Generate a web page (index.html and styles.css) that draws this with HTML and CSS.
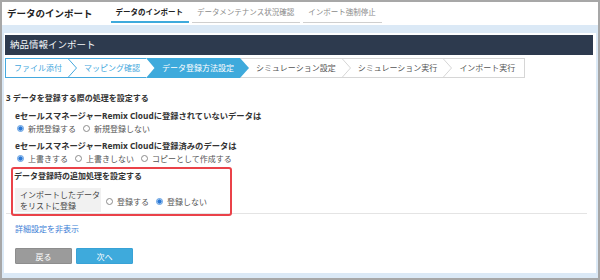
FILE: index.html
```html
<!DOCTYPE html>
<html lang="ja">
<head>
  <meta charset="UTF-8">
  <meta name="viewport" content="width=device-width, initial-scale=1.0">
  <title>データのインポート</title>
  <link rel="stylesheet" href="styles.css">
</head>
<body>
  <div class="header">
    <h1 class="page-title">データのインポート</h1>
    <nav class="tabs">
      <a class="tab active" href="#">データのインポート</a>
      <a class="tab" href="#">データメンテナンス状況確認</a>
      <a class="tab" href="#">インポート強制停止</a>
    </nav>
  </div>

  <div class="main">
    <div class="panel">
      <div class="panel-title">納品情報インポート</div>

      <div class="steps">
        <span class="step done first">ファイル添付</span>
        <span class="sep"><svg width="9" height="20" viewBox="0 0 9 20"><path d="M0 0.5H9M0 19.5H9" stroke="#45a8dd"/><polyline points="0,0.5 8.5,10 0,19.5" fill="none" stroke="#45a8dd"/></svg></span>
        <span class="step done">マッピング確認</span>
        <span class="sep"><svg width="9" height="20" viewBox="0 0 9 20"><polygon points="0,0 9,0 9,20 0,20 8.5,10" fill="#3eaadc"/></svg></span>
        <span class="step active">データ登録方法設定</span>
        <span class="sep"><svg width="9" height="20" viewBox="0 0 9 20"><path d="M0 0.5H9M0 19.5H9" stroke="#d6d6d6"/><polygon points="0,0 9,10 0,20" fill="#3eaadc"/></svg></span>
        <span class="step">シミュレーション設定</span>
        <span class="sep"><svg width="9" height="20" viewBox="0 0 9 20"><path d="M0 0.5H9M0 19.5H9" stroke="#d6d6d6"/><polyline points="0,0.5 8.5,10 0,19.5" fill="none" stroke="#d6d6d6"/></svg></span>
        <span class="step">シミュレーション実行</span>
        <span class="sep"><svg width="9" height="20" viewBox="0 0 9 20"><path d="M0 0.5H9M0 19.5H9" stroke="#d6d6d6"/><polyline points="0,0.5 8.5,10 0,19.5" fill="none" stroke="#d6d6d6"/></svg></span>
        <span class="step last">インポート実行</span>
      </div>

      <div class="content">
        <h3 class="section-title">3 データを登録する際の処理を設定する</h3>

        <p class="q">eセールスマネージャーRemix Cloudに登録されていないデータは</p>
        <div class="radios">
          <label><input type="radio" name="new" checked>新規登録する</label>
          <label><input type="radio" name="new">新規登録しない</label>
        </div>

        <p class="q">eセールスマネージャーRemix Cloudに登録済みのデータは</p>
        <div class="radios">
          <label><input type="radio" name="exist" checked>上書きする</label>
          <label><input type="radio" name="exist">上書きしない</label>
          <label><input type="radio" name="exist">コピーとして作成する</label>
        </div>

        <div class="extra">
          <h3 class="extra-title">データ登録時の追加処理を設定する</h3>
          <div class="extra-row">
            <div class="extra-label">インポートしたデータ<br>をリストに登録</div>
            <div class="radios inline">
              <label><input type="radio" name="list">登録する</label>
              <label><input type="radio" name="list" checked>登録しない</label>
            </div>
          </div>
        </div>

        <a class="toggle-link" href="#">詳細設定を非表示</a>

        <div class="buttons">
          <button class="btn btn-back">戻る</button>
          <button class="btn btn-next">次へ</button>
        </div>
      </div>
    </div>
  </div>
</body>
</html>
```

FILE: styles.css
```css
html, body {
  margin: 0;
  padding: 0;
}

body {
  width: 600px;
  height: 280px;
  box-sizing: border-box;
  border: 2px solid #a7a7a7;
  display: flex;
  flex-direction: column;
  font-family: "Noto Sans", "Noto Sans CJK JP", sans-serif;
  color: #333;
  background-color: #fff;
}

/* header */
.header {
  height: 23px;
  display: flex;
  align-items: stretch;
  flex-shrink: 0;
}

.page-title {
  margin: 0;
  padding-left: 5px;
  font-size: 9.5px;
  font-weight: bold;
  line-height: 23px;
  color: #222;
}

.tabs {
  display: flex;
  align-items: flex-end;
  gap: 3px;
  margin-left: 18px;
  margin-bottom: 2px;
}

.tab {
  font-size: 7.5px;
  line-height: 10px;
  padding: 0 6px 5px 5px;
  color: #8a8a8a;
  text-decoration: none;
  border-bottom: 1px solid #cfcfcf;
}

.tab.active {
  color: #222;
  font-weight: bold;
  padding-bottom: 4px;
  border-bottom: 2px solid #3eaadc;
}

/* main area */
.main {
  flex: 1;
  display: flex;
  flex-direction: column;
  background-color: #dbe9f6;
  padding: 8px 2px 5px 2px;
}

.panel {
  flex: 1;
  background-color: #fff;
  padding: 2px 3px 0 1px;
}

.panel-title {
  height: 20px;
  line-height: 20px;
  background-color: #2d3a4e;
  color: #f4f6f8;
  font-size: 9.5px;
  padding-left: 5px;
}

/* steps */
.steps {
  display: flex;
  width: max-content;
  margin-top: 3px;
  height: 20px;
}

.step {
  height: 20px;
  box-sizing: border-box;
  line-height: 18px;
  font-size: 8px;
  padding: 0 6px 0 7px;
  color: #555;
  border-top: 1px solid #d6d6d6;
  border-bottom: 1px solid #d6d6d6;
  white-space: nowrap;
}

.step.done {
  color: #45a8dd;
  border-color: #45a8dd;
}

.step.first {
  border-left: 1px solid #45a8dd;
  padding-left: 8px;
}

.step.active {
  color: #fff;
  background-color: #3eaadc;
  border-color: #3eaadc;
}

.step.last {
  border-right: 1px solid #d6d6d6;
  padding-right: 9px;
}

.sep {
  display: block;
  height: 20px;
}

.sep svg {
  display: block;
}

/* form content */
.content {
  margin-top: 14px;
  padding-left: 1px;
  padding-right: 6px;
}

.section-title {
  margin: 0;
  font-size: 8px;
  line-height: 12px;
  font-weight: bold;
  color: #333;
}

.q {
  margin: 6px 0 0 9px;
  font-size: 8.3px;
  line-height: 12px;
  font-weight: bold;
  color: #333;
}

.radios {
  display: flex;
  gap: 7px;
  margin-left: 11px;
  height: 12px;
  align-items: center;
  font-size: 8px;
  color: #555;
}

.radios label {
  display: inline-flex;
  align-items: center;
  white-space: nowrap;
}

.radios input {
  appearance: none;
  -webkit-appearance: none;
  width: 7px;
  height: 7px;
  margin: 0 4px 0 0;
  box-sizing: border-box;
  border: 1px solid #8c8c8c;
  border-radius: 50%;
  background-color: #fff;
}

.radios input:checked {
  border-color: #5c9ce2;
  background: radial-gradient(circle, #2a78d6 0 1.8px, #d3e5f8 2.4px);
}

/* additional processing */
.extra {
  position: relative;
  margin-top: 3px;
  padding: 3px 0 1px 8px;
  border-bottom: 1px solid #e4e4e4;
}

.extra::before {
  content: "";
  position: absolute;
  left: 5px;
  top: 0;
  width: 221px;
  height: 49px;
  box-sizing: border-box;
  border: 2px solid #ea4249;
  border-radius: 3px;
}

.extra-title {
  margin: 0;
  font-size: 8px;
  line-height: 12px;
  font-weight: bold;
  color: #333;
}

.extra-row {
  display: flex;
  align-items: center;
  margin-top: 6px;
  margin-left: 1px;
}

.extra-label {
  width: 86px;
  height: 24px;
  box-sizing: border-box;
  padding: 1px 0 0 5px;
  background-color: #f1f1f1;
  font-size: 8px;
  line-height: 11px;
  color: #444;
  white-space: nowrap;
}

.radios.inline {
  margin-left: 5px;
  padding-top: 2px;
}

.toggle-link {
  display: block;
  margin: 9px 0 0 9px;
  font-size: 8px;
  line-height: 12px;
  color: #3b7ed6;
  text-decoration: none;
}

.buttons {
  display: flex;
  gap: 4px;
  margin: 13px 0 0 9px;
}

.btn {
  width: 57px;
  height: 16px;
  padding: 0;
  font-family: inherit;
  font-size: 8px;
  color: #fff;
  border-radius: 1px;
}

.btn-back {
  background-color: #9b9b9b;
  border: 1px solid #8d8d8d;
}

.btn-next {
  background-color: #3eaadc;
  border: 1px solid #38a2d6;
}
```
